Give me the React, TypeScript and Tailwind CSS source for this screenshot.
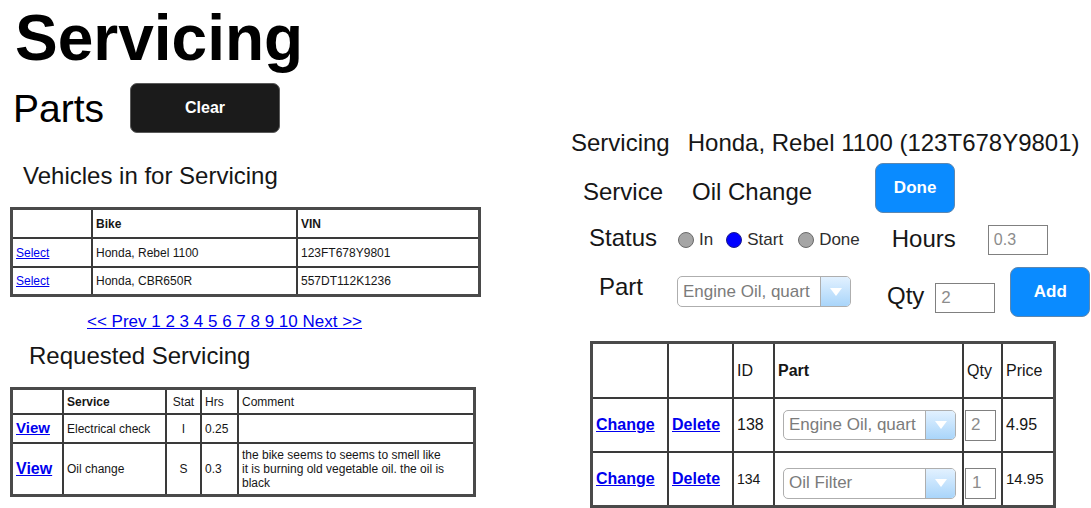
import React from "react";

function Arrow() {
  return (
    <svg width="14" height="10" viewBox="0 0 14 10">
      <polygon points="1,1 13,1 7,9" fill="#ffffff" />
    </svg>
  );
}

function Select({ label, cls }: { label: string; cls: string }) {
  return (
    <div className={"flex rounded-[5px] border border-[#aeaeae] overflow-hidden bg-white " + cls}>
      <div className="flex-1 flex items-center pl-[5px] text-[17px] text-[#7b7b7b] whitespace-nowrap overflow-hidden">
        {label}
      </div>
      <div className="w-[30px] border-l border-[#aeaeae] bg-linear-to-b from-[#e2f1ff] to-[#a9d5fa] flex items-center justify-center">
        <Arrow />
      </div>
    </div>
  );
}

function Radio({ on }: { on?: boolean }) {
  return (
    <span
      className={
        on
          ? "inline-block w-[16px] h-[16px] rounded-full bg-[#0000ff] border border-[#1c1c8c]"
          : "inline-block w-[16px] h-[16px] rounded-full bg-[#a5a5a5] border border-[#6a6a6a]"
      }
    />
  );
}

const cell = "bg-white flex items-center pl-[3px]";
const link = "text-[#0000ee] underline";

export default function App() {
  return (
    <div className="flex w-[1091px] h-[508px] overflow-hidden bg-white text-[#161616] font-['Liberation_Sans',Arial,sans-serif]">
      {/* Left column */}
      <div className="w-[560px] shrink-0 flex flex-col">
        <h1 className="ml-[15px] text-[64px] leading-[76px] font-bold text-black">Servicing</h1>
        <div className="mt-[7px] h-[50px] flex items-start">
          <span className="ml-[13px] mt-[4px] text-[39px] leading-[43px] text-black">Parts</span>
          <button className="ml-[26px] w-[150px] h-[50px] rounded-[7px] bg-[#1b1b1b] border border-[#5a5a5a] text-white font-bold text-[16px]">
            Clear
          </button>
        </div>

        <div className="mt-[29px] ml-[23px] text-[24px] leading-[28px]">Vehicles in for Servicing</div>

        <div className="mt-[17px] ml-[10px] w-[471px] border-[3px] border-[#4a4a4a] bg-[#3a3a3a] grid grid-cols-[78px_203px_180px] grid-rows-[27px_27px_26px] gap-[2px] text-[12px]">
          <div className={cell}></div>
          <div className={cell + " font-bold"}>Bike</div>
          <div className={cell + " font-bold"}>VIN</div>
          <div className={cell}><span className={link}>Select</span></div>
          <div className={cell}>Honda, Rebel 1100</div>
          <div className={cell}>123FT678Y9801</div>
          <div className={cell}><span className={link}>Select</span></div>
          <div className={cell}>Honda, CBR650R</div>
          <div className={cell}>557DT112K1236</div>
        </div>

        <div className="mt-[15px] ml-[87px] text-[17px] leading-[20px] text-[#0000ee] underline whitespace-nowrap">
          &lt;&lt; Prev 1 2 3 4 5 6 7 8 9 10 Next &gt;&gt;
        </div>

        <div className="mt-[10px] ml-[29px] text-[24px] leading-[28px]">Requested Servicing</div>

        <div className="mt-[17px] ml-[10px] w-[466px] border-[3px] border-[#4a4a4a] bg-[#3a3a3a] grid grid-cols-[49px_101px_33px_35px_234px] grid-rows-[23px_27px_50px] gap-[2px] text-[12px]">
          <div className={cell}></div>
          <div className={cell + " font-bold"}>Service</div>
          <div className="bg-white flex items-center justify-center">Stat</div>
          <div className={cell}>Hrs</div>
          <div className={cell}>Comment</div>

          <div className={cell}><span className={link + " font-bold text-[15px]"}>View</span></div>
          <div className={cell}>Electrical check</div>
          <div className="bg-white flex items-center justify-center">I</div>
          <div className={cell}>0.25</div>
          <div className={cell}></div>

          <div className={cell}><span className={link + " font-bold text-[16px]"}>View</span></div>
          <div className={cell}>Oil change</div>
          <div className="bg-white flex items-center justify-center">S</div>
          <div className={cell}>0.3</div>
          <div className={cell + " leading-[14px]"}>
            <span>
              the bike seems to seems to smell like
              <br />
              it is burning old vegetable oil. the oil is
              <br />
              black
            </span>
          </div>
        </div>
      </div>

      {/* Right column */}
      <div className="flex-1 flex flex-col pt-[129px]">
        <div className="ml-[11px] h-[28px] flex text-[24px] leading-[28px] whitespace-nowrap">
          <span>Servicing</span>
          <span className="ml-[18px]">Honda, Rebel 1100 (123T678Y9801)</span>
        </div>

        <div className="mt-[6px] h-[50px] flex items-start whitespace-nowrap">
          <span className="ml-[23px] mt-[15px] text-[24px] leading-[28px]">Service</span>
          <span className="ml-[29px] mt-[15px] text-[24px] leading-[28px]">Oil Change</span>
          <button className="ml-[63px] w-[80px] h-[50px] rounded-[8px] bg-[#0a8bff] border border-[#5d87b0] text-white font-bold text-[17px]">
            Done
          </button>
        </div>

        <div className="mt-[11px] h-[32px] flex items-start whitespace-nowrap">
          <span className="ml-[29px] text-[24px] leading-[28px]">Status</span>
          <div className="ml-[21px] mt-[7px] h-[18px] flex items-center text-[17px] leading-[18px] text-[#2e2e2e]">
            <Radio />
            <span className="ml-[5px]">In</span>
            <span className="ml-[13px] flex items-center"><Radio on /></span>
            <span className="ml-[5px]">Start</span>
            <span className="ml-[15px] flex items-center"><Radio /></span>
            <span className="ml-[5px]">Done</span>
          </div>
          <span className="ml-[32px] mt-[1px] text-[24px] leading-[28px]">Hours</span>
          <div className="ml-[32px] mt-[1px] w-[60px] h-[30px] border border-[#808080] flex items-center pl-[5px] text-[16px] text-[#8c8c8c]">
            0.3
          </div>
        </div>

        <div className="mt-[11px] h-[50px] flex items-start whitespace-nowrap">
          <span className="ml-[39px] mt-[6px] text-[24px] leading-[28px]">Part</span>
          <div className="ml-[34px] mt-[9px]">
            <Select label="Engine Oil, quart" cls="w-[174px] h-[31px]" />
          </div>
          <span className="ml-[36px] mt-[15px] text-[24px] leading-[28px]">Qty</span>
          <div className="ml-[11px] mt-[16px] w-[60px] h-[30px] border border-[#808080] flex items-center pl-[5px] text-[17px] text-[#8c8c8c]">
            2
          </div>
          <button className="ml-[15px] w-[80px] h-[50px] rounded-[8px] bg-[#0a8bff] border border-[#5d87b0] text-white font-bold text-[17px]">
            Add
          </button>
        </div>

        <div className="mt-[24px] ml-[30px] w-[466px] border-[3px] border-[#4a4a4a] bg-[#3a3a3a] grid grid-cols-[74px_63px_39px_187px_37px_50px] grid-rows-[53px_52px_52px] gap-[2px] text-[16px]">
          <div className={cell}></div>
          <div className={cell}></div>
          <div className={cell}>ID</div>
          <div className={cell + " font-bold"}>Part</div>
          <div className={cell}>Qty</div>
          <div className={cell}>Price</div>

          <div className={cell}><span className={link + " font-bold"}>Change</span></div>
          <div className={cell}><span className={link + " font-bold"}>Delete</span></div>
          <div className={cell}>138</div>
          <div className="bg-white flex items-center pl-[8px]">
            <Select label="Engine Oil, quart" cls="w-[173px] h-[30px]" />
          </div>
          <div className="bg-white flex items-center pl-[1px]">
            <div className="w-[31px] h-[31px] border border-[#808080] flex items-center pl-[5px] text-[17px] text-[#8c8c8c]">2</div>
          </div>
          <div className={cell}>4.95</div>

          <div className={cell}><span className={link + " font-bold"}>Change</span></div>
          <div className={cell}><span className={link + " font-bold"}>Delete</span></div>
          <div className={cell + " text-[14px]"}>134</div>
          <div className="bg-white flex items-center pl-[8px]">
            <div className="mt-[8px]">
              <Select label="Oil Filter" cls="w-[173px] h-[31px]" />
            </div>
          </div>
          <div className="bg-white flex items-center pl-[1px]">
            <div className="mt-[8px] w-[31px] h-[31px] border border-[#808080] flex items-center pl-[6px] text-[17px] text-[#8c8c8c]">1</div>
          </div>
          <div className={cell + " text-[15px]"}>14.95</div>
        </div>
      </div>
    </div>
  );
}
